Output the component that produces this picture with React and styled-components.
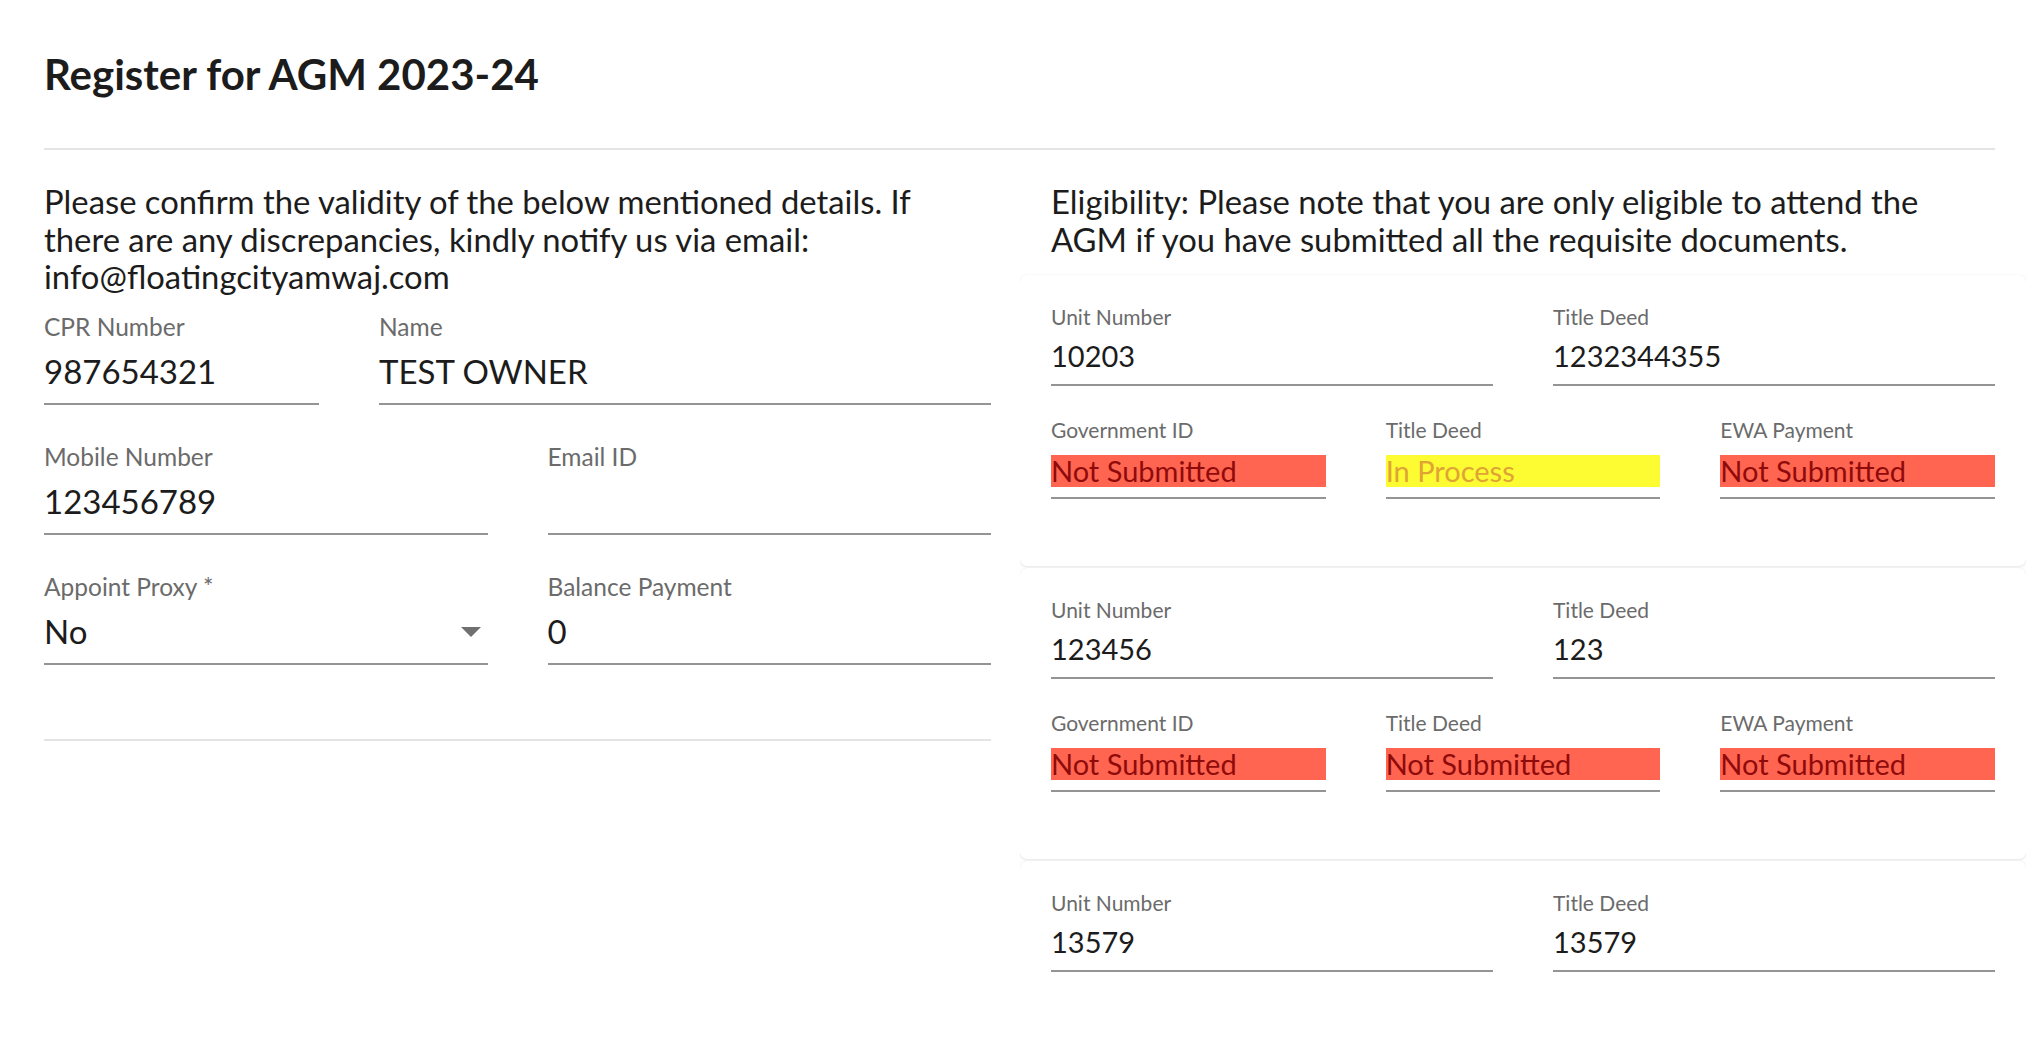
import React from "react";
import styled, { createGlobalStyle } from "styled-components";

const GlobalStyle = createGlobalStyle`
  body {
    margin: 0;
    background: #ffffff;
    color: #1c1c1c;
    font-family: Lato, "Open Sans", Arial, sans-serif;
  }
`;

const units = [
  {
    unit: "10203",
    deed: "1232344355",
    statuses: ["red", "yellow", "red"],
  },
  {
    unit: "123456",
    deed: "123",
    statuses: ["red", "red", "red"],
  },
  {
    unit: "13579",
    deed: "13579",
    statuses: ["red", "red", "red"],
  },
];

const statusText = {
  red: "Not Submitted",
  yellow: "In Process",
};

const App = () => {
  return (
    <>
      <GlobalStyle />
      <Page>
        <Title>Register for AGM 2023-24</Title>
        <Divider />
        <Columns>
          <LeftCol>
            <Note>
              Please confirm the validity of the below mentioned details. If
              <br />
              there are any discrepancies, kindly notify us via email:
              <br />
              info@floatingcityamwaj.com
            </Note>
            <FieldRows>
              <FieldRow $cols="275px 1fr">
                <Field>
                  <Label $big>CPR Number</Label>
                  <Value $big>987654321</Value>
                </Field>
                <Field>
                  <Label $big>Name</Label>
                  <Value $big>TEST OWNER</Value>
                </Field>
              </FieldRow>
              <FieldRow $cols="1fr 1fr">
                <Field>
                  <Label $big>Mobile Number</Label>
                  <Value $big>123456789</Value>
                </Field>
                <Field>
                  <Label $big>Email ID</Label>
                  <Value $big>&nbsp;</Value>
                </Field>
              </FieldRow>
              <FieldRow $cols="1fr 1fr">
                <Field>
                  <Label $big>Appoint Proxy *</Label>
                  <Value $big>
                    No
                    <Arrow viewBox="0 0 20 10" aria-hidden="true">
                      <path d="M0 0 L20 0 L10 10 Z" fill="#707070" />
                    </Arrow>
                  </Value>
                </Field>
                <Field>
                  <Label $big>Balance Payment</Label>
                  <Value $big>0</Value>
                </Field>
              </FieldRow>
            </FieldRows>
            <SectionEnd />
          </LeftCol>

          <RightCol>
            <Note>
              Eligibility: Please note that you are only eligible to attend the
              <br />
              AGM if you have submitted all the requisite documents.
            </Note>
            <CardList>
              {units.map((u) => (
                <Card key={u.unit}>
                  <FieldRow $cols="1fr 1fr">
                    <Field>
                      <Label>Unit Number</Label>
                      <Value>{u.unit}</Value>
                    </Field>
                    <Field>
                      <Label>Title Deed</Label>
                      <Value>{u.deed}</Value>
                    </Field>
                  </FieldRow>
                  <FieldRow $cols="1fr 1fr 1fr">
                    {["Government ID", "Title Deed", "EWA Payment"].map(
                      (name, i) => (
                        <Field key={name}>
                          <Label>{name}</Label>
                          <Value>
                            <StatusFill $tone={u.statuses[i]}>
                              {statusText[u.statuses[i]]}
                            </StatusFill>
                          </Value>
                        </Field>
                      )
                    )}
                  </FieldRow>
                </Card>
              ))}
            </CardList>
          </RightCol>
        </Columns>
      </Page>
    </>
  );
};

export default App;

const Page = styled.div`
  padding: 52px 49px 0 44px;
`;

const Title = styled.h1`
  margin: 0;
  font-size: 42px;
  line-height: 44px;
  font-weight: 700;
  color: #1c1c1c;
`;

const Divider = styled.div`
  height: 2px;
  background: #e4e4e4;
  margin: 52px 0 33px;
`;

const Columns = styled.div`
  display: grid;
  grid-template-columns: 947px 944px;
  column-gap: 60px;
`;

const LeftCol = styled.div`
  display: flex;
  flex-direction: column;
`;

const RightCol = styled.div`
  display: flex;
  flex-direction: column;
`;

const Note = styled.p`
  margin: 0;
  font-size: 32.8px;
  line-height: 37.5px;
  color: #1c1c1c;
  white-space: nowrap;
`;

const FieldRows = styled.div`
  display: flex;
  flex-direction: column;
  gap: 39px;
  margin-top: 18px;
`;

const FieldRow = styled.div`
  display: grid;
  grid-template-columns: ${({ $cols }) => $cols};
  column-gap: 60px;
`;

const Field = styled.div`
  display: flex;
  flex-direction: column;
  min-width: 0;
`;

const Label = styled.div`
  font-size: ${({ $big }) => ($big ? 24.5 : 21)}px;
  line-height: ${({ $big }) => ($big ? 26 : 24)}px;
  margin-bottom: 13px;
  color: #6b6b6b;
  white-space: nowrap;
`;

const Value = styled.div`
  display: flex;
  align-items: flex-start;
  justify-content: space-between;
  font-size: ${({ $big }) => ($big ? 33 : 29)}px;
  line-height: ${({ $big }) => ($big ? 36 : 28)}px;
  height: ${({ $big }) => ($big ? 36 : 32)}px;
  padding-bottom: ${({ $big }) => ($big ? 14 : 10)}px;
  border-bottom: 2px solid #949494;
  color: #1c1c1c;
  white-space: nowrap;
`;

const Arrow = styled.svg`
  align-self: center;
  width: 20px;
  height: 10px;
  margin-right: 7px;
  margin-top: 3px;
`;

const SectionEnd = styled.div`
  height: 2px;
  background: #e4e4e4;
  margin-top: 74px;
`;

const CardList = styled.div`
  display: flex;
  flex-direction: column;
  gap: 2px;
  margin: 15px -31px 0;
  padding: 2px 0 0;
  height: 718px;
  overflow: hidden;
`;

const Card = styled.div`
  flex-shrink: 0;
  display: flex;
  flex-direction: column;
  gap: 32px;
  background: #ffffff;
  border-radius: 7px;
  padding: 30px 31px 67px;
  box-shadow: 0 1px 3px rgba(0, 0, 0, 0.1), 0 0 1px rgba(0, 0, 0, 0.08);
`;

const StatusFill = styled.span`
  display: block;
  width: 100%;
  height: 32px;
  line-height: 32px;
  background: ${({ $tone }) => ($tone === "yellow" ? "#fdfc32" : "#ff6550")};
  color: ${({ $tone }) => ($tone === "yellow" ? "#dfa435" : "#8f0b0b")};
`;
